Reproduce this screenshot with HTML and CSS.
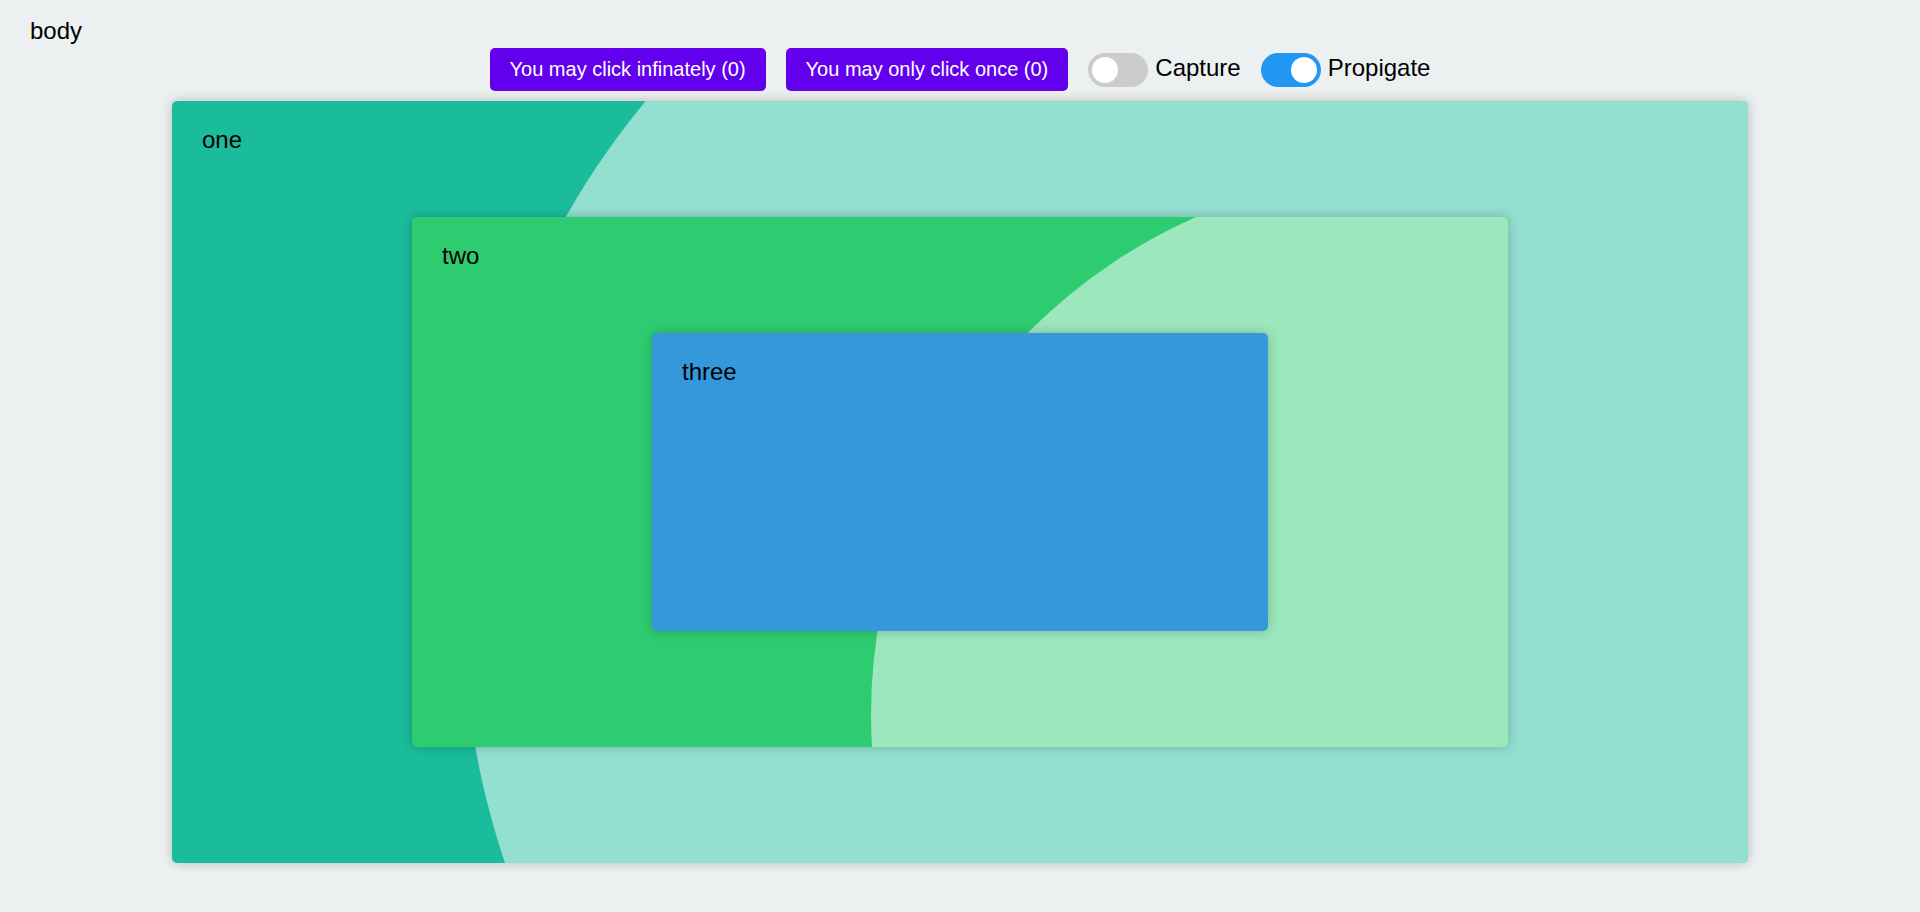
FILE: index.html
```html
<!DOCTYPE html>
<html lang="en">
<head>
<meta charset="utf-8">
<title>Event propagation</title>
<link rel="stylesheet" href="styles.css">
</head>
<body>
  <div class="page-label">body</div>
  <div class="toolbar">
    <button class="btn">You may click infinately (0)</button>
    <button class="btn">You may only click once (0)</button>
    <label class="toggle">
      <span class="switch"></span>
      <span class="toggle-text">Capture</span>
    </label>
    <label class="toggle">
      <span class="switch switch-on"></span>
      <span class="toggle-text">Propigate</span>
    </label>
  </div>
  <div class="box box-one">
    <div class="ripple ripple-one"></div>
    <div class="box-label">one</div>
    <div class="box box-two">
      <div class="ripple ripple-two"></div>
      <div class="box-label">two</div>
      <div class="box box-three">
        <div class="box-label">three</div>
      </div>
    </div>
  </div>
</body>
</html>
```
FILE: styles.css
```css
* {
  box-sizing: border-box;
}

html, body {
  height: 100%;
}

body {
  margin: 0;
  padding: 17px 30px 0;
  background: #ecf0f1;
  color: #000;
  font-family: "Liberation Sans", Arial, sans-serif;
  font-size: 24px;
  overflow: hidden;
}

.page-label {
  height: 27px;
  line-height: 27px;
}

.toolbar {
  margin-top: 4px;
  display: flex;
  justify-content: center;
  align-items: center;
  gap: 20px;
  height: 43px;
}

.btn {
  font-family: "Liberation Sans", Arial, sans-serif;
  font-size: 20px;
  line-height: 23px;
  padding: 10px 20px;
  border: none;
  border-radius: 5px;
  background: #6200ee;
  color: #fff;
  cursor: pointer;
}

.toggle {
  display: flex;
  align-items: center;
  gap: 7px;
  cursor: pointer;
}

.toggle-text {
  line-height: 27px;
  padding-bottom: 5px;
}

.switch {
  position: relative;
  display: block;
  width: 60px;
  height: 34px;
  border-radius: 34px;
  background: #ccc;
}

.switch::before {
  content: "";
  position: absolute;
  left: 4px;
  top: 4px;
  width: 26px;
  height: 26px;
  border-radius: 50%;
  background: #fff;
}

.switch-on {
  background: #2196f3;
}

.switch-on::before {
  left: 30px;
}

.box {
  position: relative;
  display: flex;
  flex-direction: column;
  padding: 25px 30px 116px;
  border-radius: 5px;
  overflow: hidden;
  box-shadow: 0 0 12px rgba(0, 0, 0, 0.22);
}

.box-label {
  position: relative;
  height: 27px;
  line-height: 27px;
}

.box .box {
  margin: 64px 210px 0;
}

.box-one {
  width: 1576px;
  height: 762px;
  margin: 10px auto 0;
  background: #1abc9c;
}

.box-two {
  height: 530px;
  background: #2ecc71;
}

.box-three {
  height: 298px;
  background: #3498db;
}

.ripple {
  position: absolute;
  border-radius: 50%;
  background: rgba(255, 255, 255, 0.53);
  pointer-events: none;
}

.ripple-one {
  left: 291px;
  top: -288px;
  width: 1590px;
  height: 1590px;
}

.ripple-two {
  left: 459px;
  top: -46px;
  width: 1088px;
  height: 1088px;
}
```
